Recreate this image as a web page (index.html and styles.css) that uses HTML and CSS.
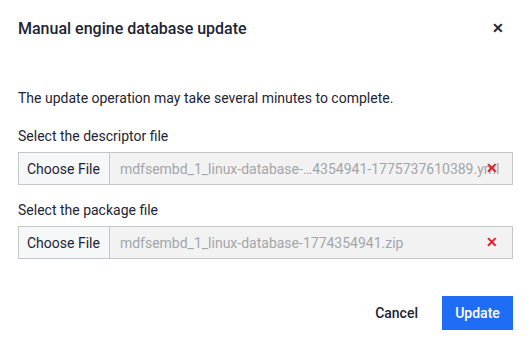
FILE: index.html
```html
<!DOCTYPE html>
<html lang="en">
<head>
    <meta charset="UTF-8">
    <title>Manual engine database update</title>
    <link rel="stylesheet" href="styles.css">
</head>
<body>
    <div class="dialog">
        <div class="dialog-header">
            <h2>Manual engine database update</h2>
            <button class="close">&#x2715;</button>
        </div>

        <p class="intro">The update operation may take several minutes to complete.</p>

        <div class="form-group">
            <label>Select the descriptor file</label>
            <div class="file-field">
                <span class="choose">Choose File</span>
                <span class="file-name">mdfsembd_1_linux-database-…4354941-1775737610389.yml</span>
                <span class="clear">&#x2715;</span>
            </div>
        </div>

        <div class="form-group">
            <label>Select the package file</label>
            <div class="file-field">
                <span class="choose">Choose File</span>
                <span class="file-name">mdfsembd_1_linux-database-1774354941.zip</span>
                <span class="clear">&#x2715;</span>
            </div>
        </div>

        <div class="actions">
            <button class="btn-cancel">Cancel</button>
            <button class="btn-update">Update</button>
        </div>
    </div>
</body>
</html>
```

FILE: styles.css
```css
* {
    margin: 0;
    padding: 0;
    box-sizing: border-box;
}

body {
    background: #ffffff;
    color: #1d2433;
    font-family: Roboto, "Liberation Sans", sans-serif;
    width: 530px;
    height: 345px;
}

.dialog {
    padding: 17px 17px 0 18px;
}

.dialog-header {
    display: flex;
    justify-content: space-between;
    align-items: center;
    height: 22px;
}

.dialog-header h2 {
    font-size: 16px;
    font-weight: 500;
}

.close {
    background: none;
    border: none;
    color: #1d2433;
    font-size: 14px;
    font-weight: bold;
    margin-right: 9px;
    cursor: pointer;
}

.intro {
    font-size: 14px;
    margin-top: 49px;
    line-height: 20px;
}

.form-group {
    margin-top: 18px;
}

.form-group + .form-group {
    margin-top: 15px;
}

.form-group label {
    display: block;
    font-size: 14px;
    line-height: 20px;
    margin-bottom: 6px;
}

.file-field {
    position: relative;
    display: flex;
    align-items: center;
    height: 33px;
    border: 1px solid #c4c6ca;
    background: #f2f2f2;
    font-size: 14px;
    overflow: hidden;
}

.choose {
    display: flex;
    align-items: center;
    height: 100%;
    padding: 0 9px 0 8px;
    background: #f6f7f9;
    border-right: 1px solid #c4c6ca;
    color: #1d2433;
}

.file-name {
    padding-left: 10px;
    color: #a3a6aa;
    white-space: nowrap;
}

.clear {
    position: absolute;
    right: 14px;
    top: 7px;
    color: #e0202f;
    font-size: 14px;
    font-weight: bold;
}

.actions {
    display: flex;
    justify-content: flex-end;
    align-items: center;
    margin-top: 37px;
    gap: 24px;
}

.actions button {
    font-family: Roboto, "Liberation Sans", sans-serif;
    font-size: 14px;
    font-weight: 500;
    border: none;
    cursor: pointer;
}

.btn-cancel {
    background: none;
    color: #1d2433;
}

.btn-update {
    background: #1f6cf5;
    color: #ffffff;
    width: 71px;
    height: 34px;
}
```
